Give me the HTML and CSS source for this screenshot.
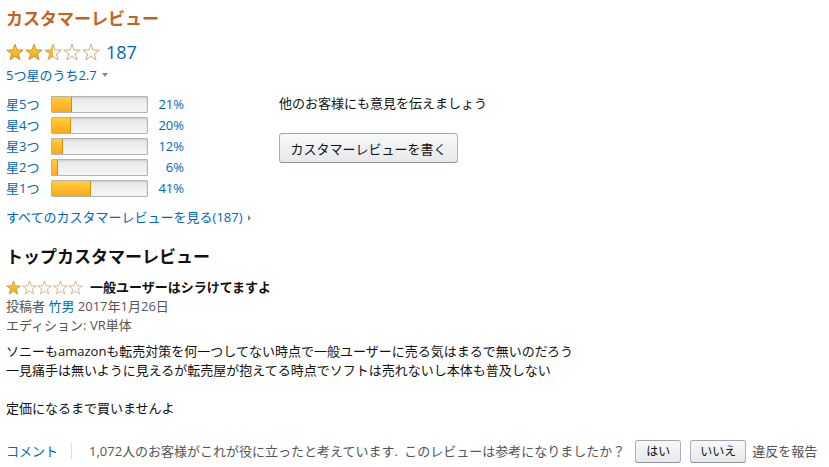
FILE: index.html
```html
<!DOCTYPE html>
<html lang="ja">
<head>
  <meta charset="UTF-8">
  <title>カスタマーレビュー</title>
  <link rel="stylesheet" href="styles.css">
</head>
<body>
  <svg width="0" height="0" class="defs">
    <defs>
      <linearGradient id="gold" x1="0" y1="0" x2="0" y2="1">
        <stop offset="0" stop-color="#ffd53e"/>
        <stop offset="1" stop-color="#f6a21b"/>
      </linearGradient>
      <linearGradient id="half" x1="0" y1="0" x2="1" y2="0">
        <stop offset="0.5" stop-color="#fbb829"/>
        <stop offset="0.5" stop-color="#fff"/>
      </linearGradient>
      <symbol id="star" viewBox="0 0 18 18">
        <polygon points="9,1.2 11.06,6.97 17.18,7.14 12.33,10.88 14.06,16.76 9,13.3 3.94,16.76 5.67,10.88 0.82,7.14 6.94,6.97"/>
      </symbol>
    </defs>
  </svg>

  <div class="summary">
    <div class="left">
      <h2 class="title">カスタマーレビュー</h2>
      <div class="avg">
        <span class="stars big">
          <svg class="full"><use href="#star"/></svg>
          <svg class="full"><use href="#star"/></svg>
          <svg class="halfstar"><use href="#star"/></svg>
          <svg class="empty"><use href="#star"/></svg>
          <svg class="empty"><use href="#star"/></svg>
        </span>
        <a class="count" href="#">187</a>
      </div>
      <a class="outof" href="#">5つ星のうち2.7<span class="caret"></span></a>

      <div class="hist">
        <div class="row"><a href="#" class="lbl">星5つ</a><span class="bar"><span class="fill" style="width:21%"></span></span><a href="#" class="pct">21%</a></div>
        <div class="row"><a href="#" class="lbl">星4つ</a><span class="bar"><span class="fill" style="width:20%"></span></span><a href="#" class="pct">20%</a></div>
        <div class="row"><a href="#" class="lbl">星3つ</a><span class="bar"><span class="fill" style="width:12%"></span></span><a href="#" class="pct">12%</a></div>
        <div class="row"><a href="#" class="lbl">星2つ</a><span class="bar"><span class="fill" style="width:6%"></span></span><a href="#" class="pct">6%</a></div>
        <div class="row"><a href="#" class="lbl">星1つ</a><span class="bar"><span class="fill" style="width:41%"></span></span><a href="#" class="pct">41%</a></div>
      </div>
      <a class="all" href="#">すべてのカスタマーレビューを見る(187)<span class="tri"></span></a>
    </div>

    <div class="right">
      <p class="share">他のお客様にも意見を伝えましょう</p>
      <button class="btn write">カスタマーレビューを書く</button>
    </div>
  </div>

  <h3 class="top">トップカスタマーレビュー</h3>

  <div class="review">
    <div class="rhead">
      <span class="stars small">
        <svg class="full"><use href="#star"/></svg>
        <svg class="empty"><use href="#star"/></svg>
        <svg class="empty"><use href="#star"/></svg>
        <svg class="empty"><use href="#star"/></svg>
        <svg class="empty"><use href="#star"/></svg>
      </span>
      <b class="rtitle">一般ユーザーはシラけてますよ</b>
    </div>
    <div class="meta">投稿者 <a href="#">竹男</a> 2017年1月26日</div>
    <div class="meta">エディション: VR単体</div>
    <div class="body">
      ソニーもamazonも転売対策を何一つしてない時点で一般ユーザーに売る気はまるで無いのだろう<br>
      一見痛手は無いように見えるが転売屋が抱えてる時点でソフトは売れないし本体も普及しない<br>
      <br>
      定価になるまで買いませんよ
    </div>
    <div class="foot">
      <a href="#">コメント</a>
      <span class="sep"></span>
      <span class="helpful">1,072人のお客様がこれが役に立ったと考えています. <span class="ask">このレビューは参考になりましたか？</span></span>
      <button class="btn small-btn yes">はい</button>
      <button class="btn small-btn">いいえ</button>
      <span class="report">違反を報告</span>
    </div>
  </div>
</body>
</html>
```

FILE: styles.css
```css
* {
  box-sizing: border-box;
}
body {
  margin: 0;
  padding: 9px 6px;
  font-family: "Open Sans", "Noto Sans CJK JP", sans-serif;
  font-size: 13px;
  line-height: 19px;
  color: #111;
  background: #fff;
}
a {
  color: #0066c0;
  text-decoration: none;
}
.defs {
  position: absolute;
}
.summary {
  display: flex;
}
.left {
  width: 272px;
}
.title {
  margin: 0;
  font-size: 17px;
  line-height: 20px;
  font-weight: bold;
  color: #c4621f;
}
.avg {
  display: flex;
  align-items: center;
  margin-top: 13px;
  height: 20px;
}
.stars {
  display: inline-flex;
}
.stars svg {
  fill: url(#gold);
  stroke: #c98a1c;
  stroke-width: 0.9;
}
.stars .empty {
  fill: #fff;
  stroke: #c9a46c;
}
.stars .halfstar {
  fill: url(#half);
  stroke: #c9a46c;
}
.big svg {
  width: 18px;
  height: 18px;
  margin-right: 1px;
}
.count {
  font-size: 18px;
  margin-left: 5px;
}
.outof {
  display: inline-block;
  margin-top: 4px;
  line-height: 18px;
}
.caret {
  display: inline-block;
  margin-left: 5px;
  vertical-align: 3px;
  border-left: 3px solid transparent;
  border-right: 3px solid transparent;
  border-top: 4px solid #888;
}
.hist {
  margin-top: 9px;
}
.row {
  display: flex;
  align-items: center;
  height: 21px;
}
.lbl {
  width: 45px;
}
.bar {
  position: relative;
  width: 97px;
  height: 17px;
  border: 1px solid #b4b4b4;
  border-radius: 1px;
  background: linear-gradient(#e7e7e7, #f6f6f6);
  box-shadow: inset 0 1px 2px rgba(0,0,0,0.12);
  overflow: hidden;
}
.fill {
  display: block;
  height: 100%;
  background: linear-gradient(#ffce3d, #ffa717);
  border-right: 1px solid #d48f0e;
}
.pct {
  width: 36px;
  text-align: right;
}
.all {
  display: inline-block;
  margin-top: 9px;
  line-height: 18px;
}
.tri {
  display: inline-block;
  margin-left: 5px;
  vertical-align: 1px;
  border-top: 3px solid transparent;
  border-bottom: 3px solid transparent;
  border-left: 3px solid #888;
}
.right {
  padding-top: 84px;
  padding-left: 1px;
}
.share {
  margin: 0;
  line-height: 21px;
}
.btn {
  font-family: inherit;
  font-size: 13px;
  color: #111;
  background: linear-gradient(#f7f8fa, #e7e9ec);
  border: 1px solid #adb1b8;
  border-top-color: #a2a6ac;
  border-bottom-color: #8d9096;
  border-radius: 3px;
  cursor: pointer;
}
.write {
  margin-top: 19px;
  width: 179px;
  height: 30px;
  padding: 0;
}
.top {
  margin: 19px 0 0;
  font-size: 17px;
  line-height: 22px;
  font-weight: bold;
}
.rhead {
  display: flex;
  align-items: center;
  margin-top: 10px;
  height: 18px;
}
.small svg {
  width: 15px;
  height: 15px;
  margin-right: 0.6px;
}
.rtitle {
  margin-left: 6px;
}
.meta {
  color: #555;
}
.rhead + .meta {
  margin-top: 1px;
}
.body {
  margin-top: 7px;
}
.foot {
  display: flex;
  align-items: center;
  margin-top: 21px;
  height: 24px;
  color: #555;
}
.sep {
  width: 1px;
  height: 16px;
  background: #ddd;
  margin: 0 17px 0 13px;
}
.ask {
  margin-left: 3px;
}
.small-btn {
  height: 23px;
  padding: 0 9px;
  margin-left: 9px;
  font-size: 12px;
}
.yes {
  margin-left: 10px;
  width: 46px;
}
.report {
  margin-left: 6px;
}
```
